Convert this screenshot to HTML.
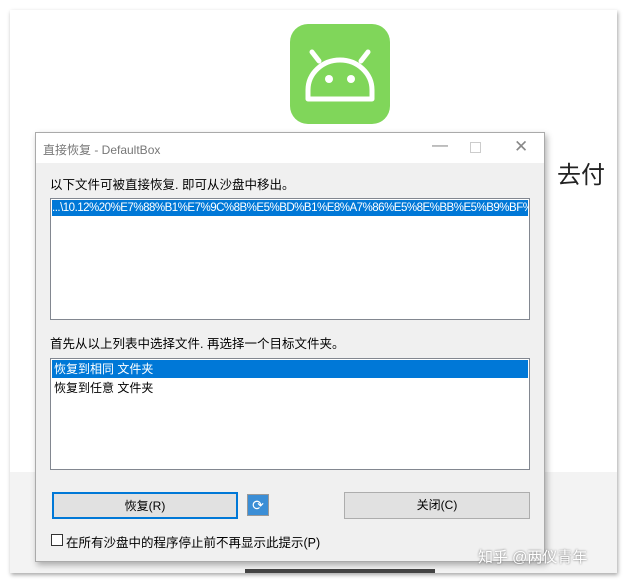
<!DOCTYPE html>
<html><head><meta charset="utf-8"><style>
*{margin:0;padding:0;box-sizing:border-box}
body{width:631px;height:584px;background:#fff;position:relative;overflow:hidden;font-family:"Liberation Sans","Noto Sans CJK SC",sans-serif;font-size:12px;color:#000}
.card{position:absolute;left:10px;top:10px;width:607px;height:563px;background:#fff;box-shadow:1px 2px 4px rgba(0,0,0,.35)}
.gray{position:absolute;left:10px;top:472px;width:607px;height:101px;background:#f3f3f3}
.logo{position:absolute;left:290px;top:24px;width:100px;height:100px;background:#80d65a;border-radius:18px}
.dlg{position:absolute;left:35px;top:132px;width:510px;height:430px;background:#f0f0f0;border:1px solid #aaa;box-shadow:2px 3px 6px rgba(0,0,0,.3)}
.tb{height:30px;background:#fff;position:relative}
.tb span{position:absolute;left:7px;top:8px;color:#777;font-size:12px}
.abs{position:absolute}
.lb{position:absolute;background:#fff;border:1px solid #828790}
.btn{position:absolute;background:#e1e1e1;border:1px solid #adadad;text-align:center;line-height:24px;font-size:12px}
</style></head><body>
<div class="card"></div>
<div class="gray"></div>
<div class="logo">
<svg width="100" height="100" viewBox="0 0 100 100"><g stroke="#fff" stroke-width="5" fill="none" stroke-linecap="round"><line x1="22" y1="28" x2="29" y2="37"/><line x1="78" y1="28" x2="71" y2="37"/><path d="M18 75 L18 66 A32 30 0 0 1 82 66 L82 75 Z" stroke-linejoin="round"/></g><circle cx="39" cy="55" r="4" fill="#fff"/><circle cx="61" cy="55" r="4" fill="#fff"/></svg>
</div>
<div class="abs" style="left:557px;top:155px;font-size:24px;color:#222">去付</div>
<div class="abs" style="left:245px;top:569px;width:190px;height:4px;background:#444"></div>
<div class="dlg">
<div class="tb"><span>直接恢复 - DefaultBox</span>
<span style="left:396px;top:4px;font-size:16px;color:#888">—</span>
<div class="abs" style="left:434px;top:9px;width:11px;height:11px;border:1px solid #ccc"></div>
<span style="left:478px;top:4px;font-size:17px;color:#888">✕</span></div>
<div class="abs" style="left:14px;top:41px;font-size:12.5px">以下文件可被直接恢复. 即可从沙盘中移出。</div>
<div class="lb" style="left:14px;top:65px;width:480px;height:122px"><div style="margin:1px;height:16px;background:#0078d7;color:#fff;font-size:11.5px;line-height:16px;white-space:nowrap;overflow:hidden;letter-spacing:-.5px">...\10.12%20%E7%88%B1%E7%9C%8B%E5%BD%B1%E8%A7%86%E5%8E%BB%E5%B9%BF%E5%9</div></div>
<div class="abs" style="left:14px;top:200px;font-size:12.5px">首先从以上列表中选择文件. 再选择一个目标文件夹。</div>
<div class="lb" style="left:14px;top:225px;width:480px;height:112px"><div style="margin:1px;height:18px;background:#0078d7;color:#fff;line-height:18px;padding-left:2px">恢复到相同 文件夹</div><div style="line-height:18px;padding-left:3px">恢复到任意 文件夹</div></div>
<div class="btn" style="left:16px;top:359px;width:186px;height:27px;border:2px solid #0078d7">恢复(R)</div>
<div class="abs" style="left:211px;top:361px;width:22px;height:22px;background:#3b8ed6;border:1px solid #999;color:#fff;text-align:center;line-height:20px;font-size:14px">⟳</div>
<div class="btn" style="left:308px;top:359px;width:186px;height:27px">关闭(C)</div>
<div class="abs" style="left:15px;top:401px;width:12px;height:12px;border:1px solid #333;background:#fff"></div>
<div class="abs" style="left:30px;top:399px;font-size:12.5px">在所有沙盘中的程序停止前不再显示此提示(P)</div>
</div>
<div class="abs" style="left:478px;top:546px;font-size:15px;color:#fff;text-shadow:0 0 2px #666">知乎 @两仪青年</div>
</body></html>
